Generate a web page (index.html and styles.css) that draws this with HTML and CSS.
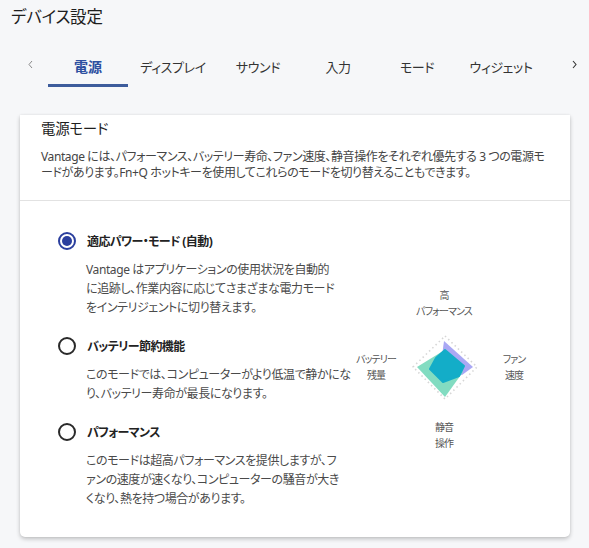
FILE: index.html
```html
<!DOCTYPE html>
<html lang="ja">
<head>
<meta charset="utf-8">
<title>デバイス設定</title>
<link rel="stylesheet" href="styles.css">
</head>
<body>
<header class="page-head">
  <h1 class="page-title">デバイス設定</h1>
  <nav class="tabs">
    <span class="chev chev-left"><svg width="7" height="9" viewBox="0 0 7 9"><path d="M5 1 L2 4.5 L5 8" fill="none" stroke="#8a8a8a" stroke-width="1"/></svg></span>
    <div class="tab-list">
      <a class="tab active">電源</a>
      <a class="tab">ディスプレイ</a>
      <a class="tab">サウンド</a>
      <a class="tab">入力</a>
      <a class="tab">モード</a>
      <a class="tab">ウィジェット</a>
    </div>
    <span class="chev chev-right"><svg width="7" height="9" viewBox="0 0 7 9"><path d="M2 1 L5 4.5 L2 8" fill="none" stroke="#333" stroke-width="1.1"/></svg></span>
  </nav>
</header>

<section class="card">
  <div class="card-top">
    <h2 class="card-title">電源モード</h2>
    <p class="card-desc">Vantage には、パフォーマンス、バッテリー寿命、ファン速度、静音操作をそれぞれ優先する 3 つの電源モ<br>ードがあります。Fn+Q ホットキーを使用してこれらのモードを切り替えることもできます。</p>
  </div>
  <div class="card-body">
    <div class="options">
      <div class="option">
        <div class="option-head"><span class="radio checked"></span><span class="option-title">適応パワー・モード (自動)</span></div>
        <p class="option-desc">Vantage はアプリケーションの使用状況を自動的<br>に追跡し、作業内容に応じてさまざまな電力モード<br>をインテリジェントに切り替えます。</p>
      </div>
      <div class="option">
        <div class="option-head"><span class="radio"></span><span class="option-title">バッテリー節約機能</span></div>
        <p class="option-desc">このモードでは、コンピューターがより低温で静かにな<br>り、バッテリー寿命が最長になります。</p>
      </div>
      <div class="option">
        <div class="option-head"><span class="radio"></span><span class="option-title">パフォーマンス</span></div>
        <p class="option-desc">このモードは超高パフォーマンスを提供しますが、フ<br>ァンの速度が速くなり、コンピューターの騒音が大き<br>くなり、熱を持つ場合があります。</p>
      </div>
    </div>
    <div class="chart">
      <svg class="chart-svg" width="200" height="170" viewBox="0 0 200 170">
        <polygon points="100,52 132,83 100,115 68,83" fill="none" stroke="#d6d6d6" stroke-width="1.6" stroke-dasharray="1.5 3"/>
        <polygon points="99,57 128,83 117,91 95,87" fill="#aaa8f4"/>
        <polygon points="72,83 98,67 118,88 100,113" fill="#82dcc1"/>
        <polygon points="100,66 119,82 114,92 98,98 85,85 91,74" fill="#13adc8" stroke="#13adc8" stroke-width="2" stroke-linejoin="round"/>
      </svg>
      <div class="axis axis-top">高<br>パフォーマンス</div>
      <div class="axis axis-left">バッテリー<br>残量</div>
      <div class="axis axis-right">ファン<br>速度</div>
      <div class="axis axis-bottom">静音<br>操作</div>
    </div>
  </div>
</section>
</body>
</html>
```

FILE: styles.css
```css
* { box-sizing: border-box; }

html, body {
  margin: 0;
  padding: 0;
}

body {
  width: 589px;
  height: 548px;
  overflow: hidden;
  background: #f6f7f9;
  font-family: "Noto Sans", "Noto Sans CJK JP", sans-serif;
  font-feature-settings: "palt";
  color: #222;
}

.page-head {
  padding: 5px 0 0 0;
}

.page-title {
  margin: 0 0 0 11px;
  font-size: 16.5px;
  line-height: 24px;
  font-weight: 400;
  letter-spacing: -0.2px;
  color: #1e1e1e;
}

.tabs {
  margin-top: 18px;
  display: flex;
  align-items: center;
}

.chev {
  display: flex;
  align-items: center;
  justify-content: center;
  width: 7px;
  height: 9px;
  margin-bottom: 6px;
}

.chev-left {
  margin-left: 27px;
  margin-right: 14px;
}

.chev-right {
  margin-left: 25px;
}

.tab-list {
  display: grid;
  grid-template-columns: 80px 90px 80px 80px 78px 90px;
}

.tab {
  display: block;
  text-align: center;
  padding: 10px 0 7px;
  font-size: 13px;
  line-height: 20px;
  letter-spacing: -0.4px;
  color: #333;
  border-bottom: 3px solid transparent;
}

.tab.active {
  color: #2d4fa0;
  font-weight: 700;
  font-size: 14px;
  letter-spacing: 0;
  border-bottom-color: #3d5c9c;
}

.card {
  margin: 28px 0 0 20px;
  width: 550px;
  height: 422px;
  background: #fff;
  border-radius: 0 0 5px 5px;
  box-shadow: 0 2px 4px rgba(0, 0, 0, 0.22), 0 0 2px rgba(0, 0, 0, 0.08);
}

.card-top {
  padding: 3px 21px 19px;
  border-bottom: 1px solid #e2e2e2;
}

.card-title {
  margin: 0;
  font-size: 14.5px;
  line-height: 20px;
  font-weight: 400;
  letter-spacing: -0.3px;
  color: #1e1e1e;
}

.card-desc {
  margin: 11px 0 0;
  font-size: 12px;
  line-height: 16px;
  letter-spacing: -0.4px;
  color: #444;
  white-space: nowrap;
}

.card-body {
  display: flex;
  align-items: center;
  height: 336px;
}

.options {
  width: 325px;
  padding: 30px 0 29px 37px;
  display: flex;
  flex-direction: column;
  gap: 19px;
}

.option-head {
  display: flex;
  align-items: center;
  height: 20px;
}

.radio {
  width: 18px;
  height: 18px;
  border-radius: 50%;
  border: 2px solid #2a2a2a;
  margin: 0 11px 0 1px;
  position: relative;
  flex: none;
}

.radio.checked {
  border-color: #2b3f9e;
}

.radio.checked::after {
  content: "";
  position: absolute;
  left: 2px;
  top: 2px;
  width: 10px;
  height: 10px;
  border-radius: 50%;
  background: #2b3f9e;
}

.option-title {
  font-size: 12px;
  font-weight: 700;
  letter-spacing: -0.6px;
  color: #222;
}

.option-desc {
  margin: 9px 0 0 29px;
  font-size: 12px;
  line-height: 19px;
  letter-spacing: -0.4px;
  color: #4a4a4a;
  white-space: nowrap;
}

.chart {
  position: relative;
  width: 200px;
  height: 170px;
  flex: none;
}

.chart-svg {
  position: absolute;
  left: 0;
  top: 0;
}

.axis {
  position: absolute;
  font-size: 10px;
  line-height: 16px;
  letter-spacing: -0.9px;
  color: #555;
  text-align: center;
  white-space: nowrap;
  transform: translateX(-50%);
}

.axis-top { left: 99px; top: 3px; }
.axis-left { left: 31px; top: 67px; }
.axis-right { left: 169px; top: 67px; }
.axis-bottom { left: 99px; top: 135px; }
```
